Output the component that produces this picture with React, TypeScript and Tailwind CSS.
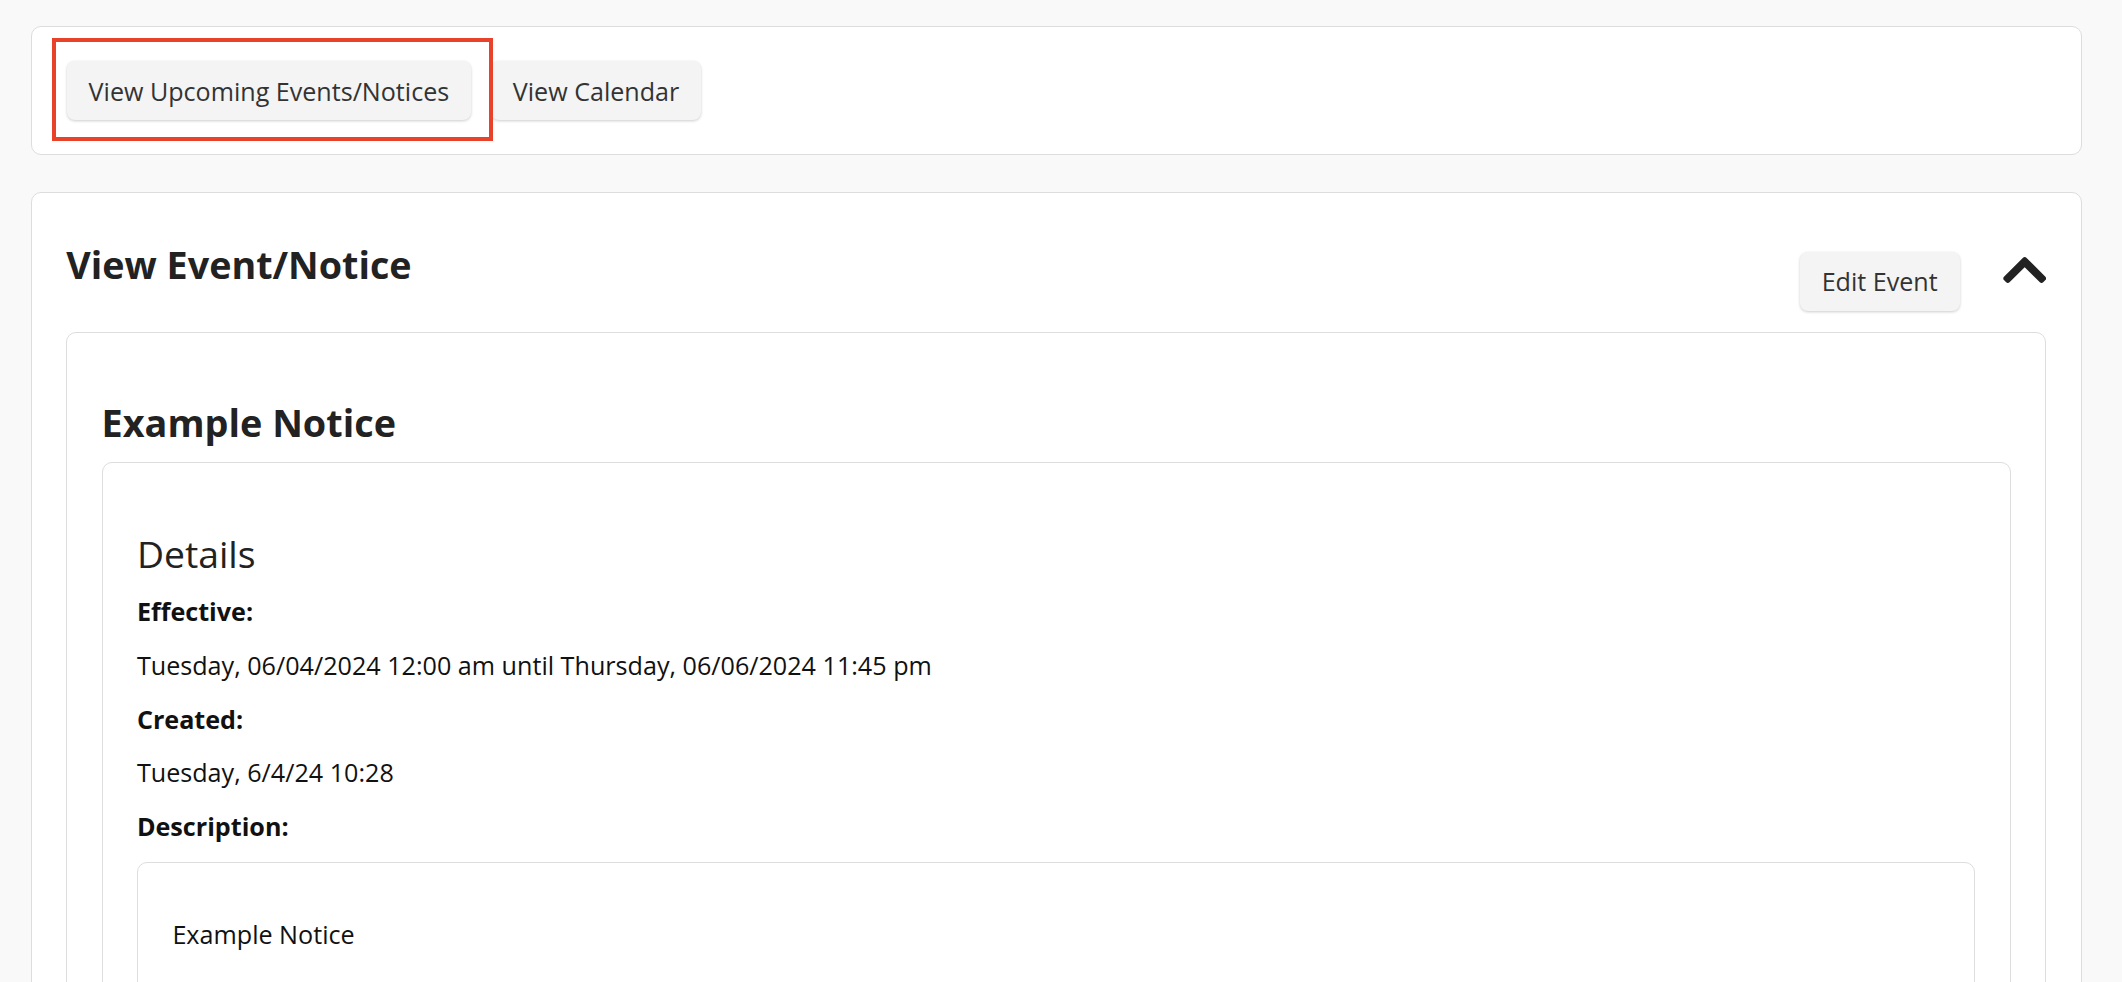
import React from "react";

function ChevronUp() {
  return (
    <svg
      width="43.4"
      height="26"
      viewBox="5.66 123.5 436.7 265"
      className="block"
      aria-hidden="true"
    >
      <path
        fill="#222222"
        d="M240.971 130.524l194.343 194.343c9.373 9.373 9.373 24.569 0 33.941l-22.667 22.667c-9.357 9.357-24.522 9.375-33.901.04L224 227.495 69.255 381.516c-9.379 9.335-24.544 9.317-33.901-.04l-22.667-22.667c-9.373-9.373-9.373-24.569 0-33.941L207.03 130.525c9.372-9.373 24.568-9.373 33.941-.001z"
      />
    </svg>
  );
}

function Btn({ children }: { children: React.ReactNode }) {
  return (
    <button
      type="button"
      className="h-[59px] rounded-[8px] bg-[#f4f4f4] px-[22px] text-[25.1px] leading-[38px] text-[#333333] shadow-[0_1px_3px_rgba(0,0,0,0.2)] whitespace-nowrap"
    >
      {children}
    </button>
  );
}

function Line({ children, bold }: { children: React.ReactNode; bold?: boolean }) {
  return (
    <div
      className={
        bold
          ? "text-[25.15px] leading-[38px] font-bold text-[#111111]"
          : "text-[25.15px] leading-[38px] text-[#111111]"
      }
    >
      {children}
    </div>
  );
}

export default function App() {
  return (
    <div className="min-h-screen bg-[#f9f9f9] pt-[26px] pl-[30.6px] pr-[40.3px] pb-[40px] font-['Open_Sans',sans-serif]">
      {/* Top toolbar card */}
      <div className="flex items-start gap-[19.6px] rounded-[10px] border border-[#dddddd] bg-white px-[35px] py-[34px]">
        <div className="relative">
          <Btn>View Upcoming Events/Notices</Btn>
          <div className="pointer-events-none absolute left-[-14.4px] top-[-22.7px] h-[103px] w-[440.4px] border-[4.3px] border-[#e8432a]" />
        </div>
        <Btn>View Calendar</Btn>
      </div>

      {/* View Event card */}
      <div className="mt-[37px] rounded-[10px] border border-[#dddddd] bg-white px-[34.7px] pt-[35px] pb-[35px]">
        <div className="flex items-start">
          <h2 className="mt-[10.5px] text-[37.7px] leading-[52px] font-bold text-[#222222]">
            View Event/Notice
          </h2>
          <div className="ml-auto mt-[23.7px]">
            <Btn>Edit Event</Btn>
          </div>
          <div className="ml-[43px] mt-[29px]">
            <ChevronUp />
          </div>
        </div>

        <div className="mt-[21px] rounded-[10px] border border-[#dddddd] bg-white px-[34.3px] pt-[35px] pb-[35px]">
          <h3 className="mt-[29px] text-[37.8px] leading-[52px] font-bold text-[#222222]">
            Example Notice
          </h3>

          <div className="mt-[13px] rounded-[10px] border border-[#dddddd] bg-white px-[34.3px] pt-[35px] pb-[35px]">
            <h4 className="mt-[30px] text-[37.3px] leading-[51px] font-normal text-[#222222]">
              Details
            </h4>
            <div className="mt-[13.6px] flex flex-col gap-[15.7px]">
              <Line bold>Effective:</Line>
              <Line>Tuesday, 06/04/2024 12:00 am until Thursday, 06/06/2024 11:45 pm</Line>
              <Line bold>Created:</Line>
              <Line>Tuesday, 6/4/24 10:28</Line>
              <Line bold>Description:</Line>
            </div>

            <div className="mt-[17.4px] rounded-[10px] border border-[#dddddd] bg-white px-[34.5px] pt-[35px] pb-[60px]">
              <p className="mt-[16.2px] text-[25.15px] leading-[38px] text-[#111111]">Example Notice</p>
            </div>
          </div>
        </div>
      </div>
    </div>
  );
}
